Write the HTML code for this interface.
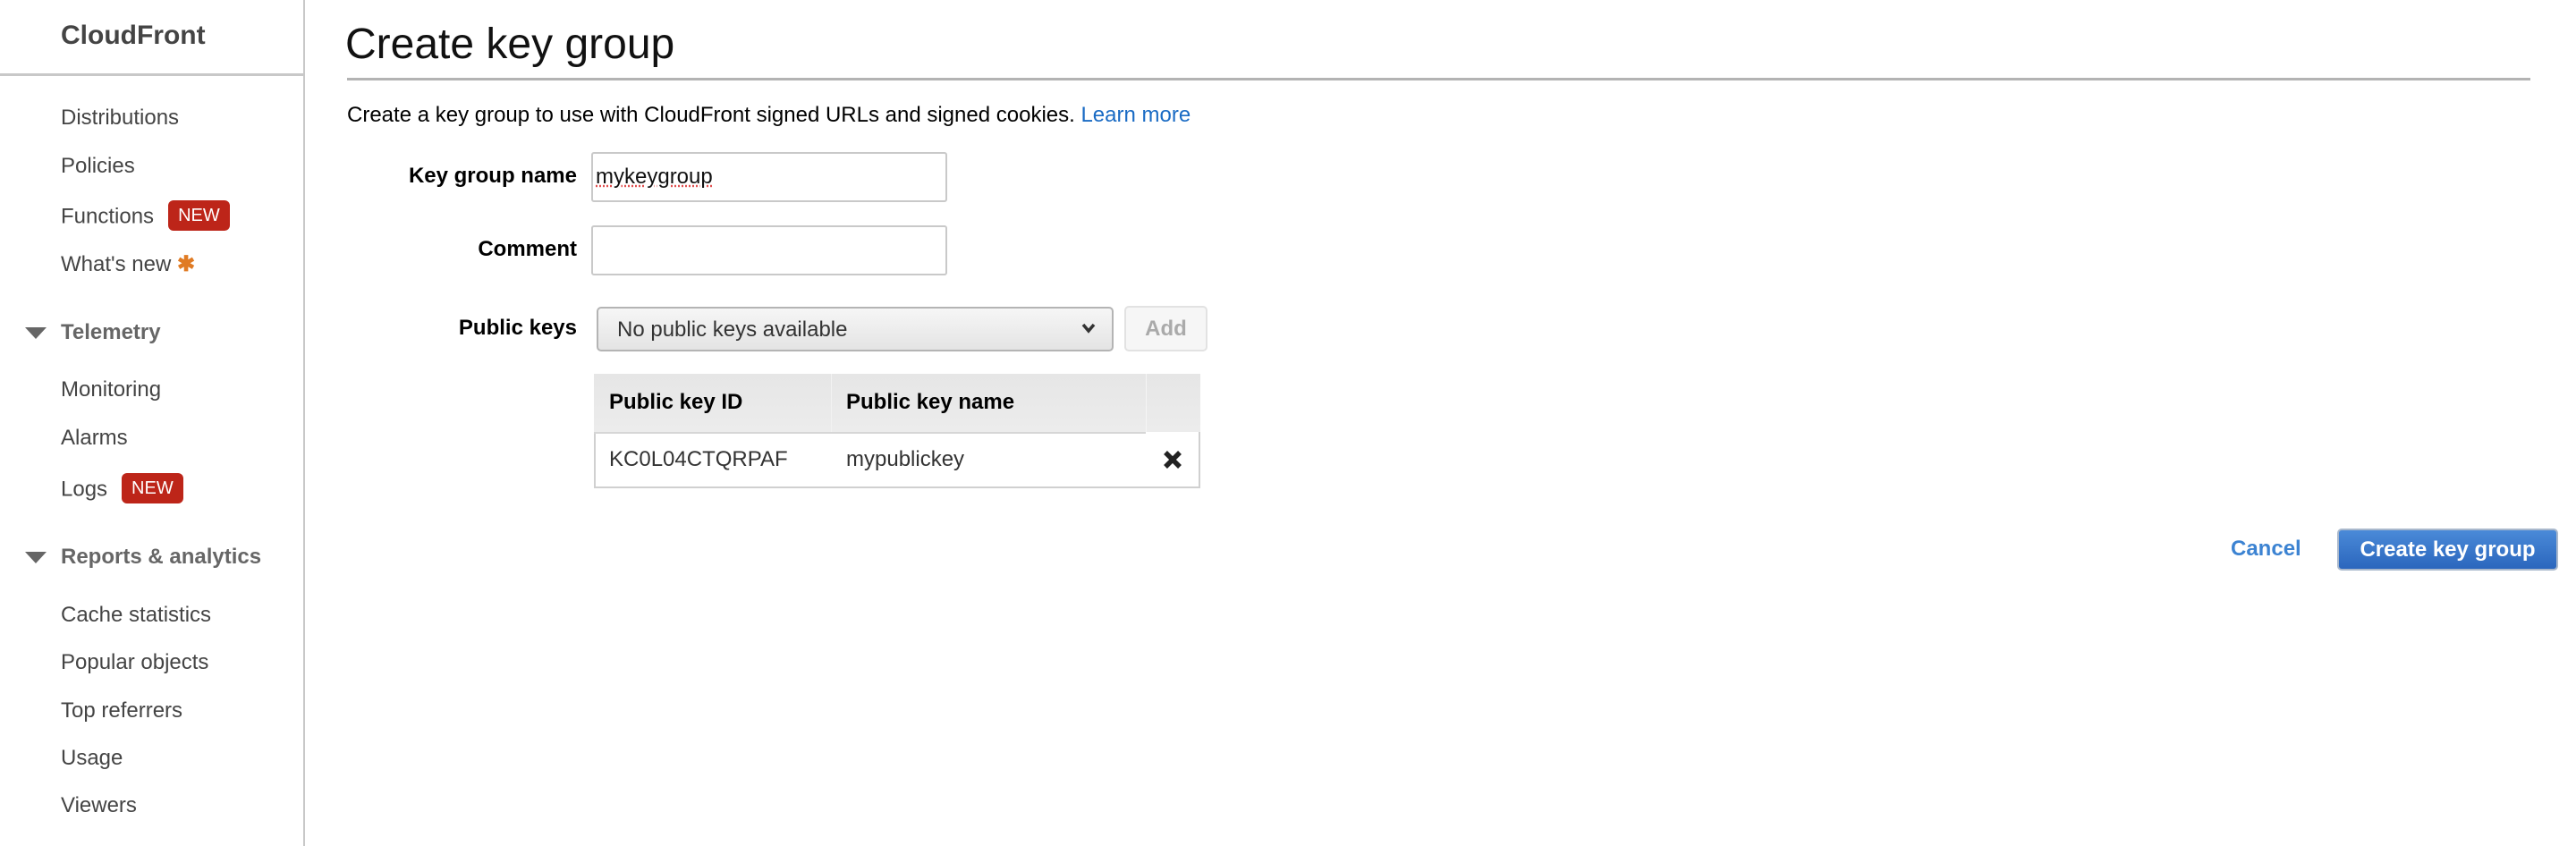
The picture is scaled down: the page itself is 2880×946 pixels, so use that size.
<!DOCTYPE html>
<html><head><meta charset="utf-8"><style>
*{margin:0;padding:0;box-sizing:border-box}
body{width:2880px;height:946px;background:#fff;font-family:"Liberation Sans",Arial,sans-serif;position:relative;overflow:hidden}
.a{position:absolute;white-space:nowrap}
.side{position:absolute;left:0;top:0;width:341px;height:946px;border-right:2px solid #c8c8c8}
.nav{position:absolute;left:68px;font-size:24px;color:#444;line-height:28px;transform:translateY(-14px)}
.sec{position:absolute;left:68px;font-size:24px;color:#666;font-weight:bold;line-height:28px;transform:translateY(-14px)}
.tri{position:absolute;left:28px;width:0;height:0;border-left:12.5px solid transparent;border-right:12.5px solid transparent;border-top:13px solid #666}
.badge{display:inline-block;background:#bd2519;color:#fff;font-size:20px;border-radius:6px;padding:0 11px;line-height:34px;margin-left:16px;vertical-align:middle;position:relative;top:-2px}
.lbl{position:absolute;right:calc(2880px - 645px);font-size:24px;font-weight:bold;color:#000;line-height:28px;transform:translateY(-14px)}
.inp{position:absolute;left:661px;width:398px;height:56px;border:2px solid #c9c9c9;border-radius:3px;background:#fff}
</style></head><body>
<div class="side"></div>
<div class="a" style="left:0;top:82px;width:341px;height:3px;background:#c8c8c8"></div>
<div class="a" style="left:68px;top:23px;font-size:30px;font-weight:bold;color:#444">CloudFront</div>
<div class="nav" style="top:132px">Distributions</div>
<div class="nav" style="top:186px">Policies</div>
<div class="nav" style="top:240px">Functions<span class="badge">NEW</span></div>
<div class="nav" style="top:296px">What's new <span style="color:#e07b24;font-weight:bold">✱</span></div>
<div class="tri" style="top:366px"></div>
<div class="sec" style="top:372px">Telemetry</div>
<div class="nav" style="top:436px">Monitoring</div>
<div class="nav" style="top:490px">Alarms</div>
<div class="nav" style="top:545px">Logs<span class="badge">NEW</span></div>
<div class="tri" style="top:617px"></div>
<div class="sec" style="top:623px">Reports &amp; analytics</div>
<div class="nav" style="top:688px">Cache statistics</div>
<div class="nav" style="top:741px">Popular objects</div>
<div class="nav" style="top:795px">Top referrers</div>
<div class="nav" style="top:848px">Usage</div>
<div class="nav" style="top:901px">Viewers</div>

<div class="a" style="left:386px;top:22px;font-size:48px;color:#111;line-height:56px">Create key group</div>
<div class="a" style="left:388px;top:87px;width:2441px;height:3px;background:#b3b3b3"></div>
<div class="a" style="left:388px;top:115px;font-size:24px;color:#000;line-height:28px">Create a key group to use with CloudFront signed URLs and signed cookies. <span style="color:#1a6bc4">Learn more</span></div>

<div class="lbl" style="top:197px">Key group name</div>
<div class="inp" style="top:170px"><span class="a" style="left:3px;top:12px;font-size:24px;color:#111;text-decoration:underline dotted #e05050">mykeygroup</span></div>
<div class="lbl" style="top:279px">Comment</div>
<div class="inp" style="top:252px"></div>
<div class="lbl" style="top:367px">Public keys</div>
<div class="a" style="left:667px;top:343px;width:578px;height:50px;border:2px solid #b4b4b4;border-radius:5px;background:linear-gradient(#f6f6f6,#e4e4e4)">
<span class="a" style="left:21px;top:10px;font-size:24px;color:#333">No public keys available</span>
<svg class="a" style="left:540px;top:16px" width="16" height="12" viewBox="0 0 16 12"><path d="M2 2 L8 9 L14 2" stroke="#333" stroke-width="3.5" fill="none"/></svg>
</div>
<div class="a" style="left:1257px;top:342px;width:93px;height:51px;border:2px solid #e2e2e2;border-radius:5px;background:#f6f6f6;font-size:24px;font-weight:bold;color:#aaa;text-align:center;line-height:47px">Add</div>

<div class="a" style="left:664px;top:418px;width:678px;height:128px;border:2px solid #d0d0d0;border-top:none;background:#fff"></div>
<div class="a" style="left:664px;top:418px;width:678px;height:65px;background:linear-gradient(#e6e6e6,#ececec)"></div>
<div class="a" style="left:929px;top:418px;width:1px;height:65px;background:#f2f2f2"></div>
<div class="a" style="left:1281px;top:418px;width:1px;height:65px;background:#f5f5f5"></div>
<div class="a" style="left:664px;top:483px;width:617px;height:2px;background:#d6d6d6"></div>
<div class="a" style="left:681px;top:436px;font-size:24px;font-weight:bold;color:#000">Public key ID</div>
<div class="a" style="left:946px;top:436px;font-size:24px;font-weight:bold;color:#000">Public key name</div>
<div class="a" style="left:681px;top:500px;font-size:24px;color:#333">KC0L04CTQRPAF</div>
<div class="a" style="left:946px;top:500px;font-size:24px;color:#333">mypublickey</div>
<svg class="a" style="left:1300px;top:503px" width="22" height="22" viewBox="0 0 22 22"><path d="M3 3 L19 19 M19 3 L3 19" stroke="#222" stroke-width="5.5"/></svg>

<div class="a" style="left:2494px;top:600px;font-size:24px;font-weight:bold;color:#3c83d2;line-height:28px">Cancel</div>
<div class="a" style="left:2613px;top:591px;width:247px;height:47px;border:2px solid #a9b8cc;border-radius:5px;background:linear-gradient(#4a8ad8,#2b66bd);color:#fff;font-size:24px;font-weight:bold;text-align:center;line-height:43px">Create key group</div>
</body></html>
